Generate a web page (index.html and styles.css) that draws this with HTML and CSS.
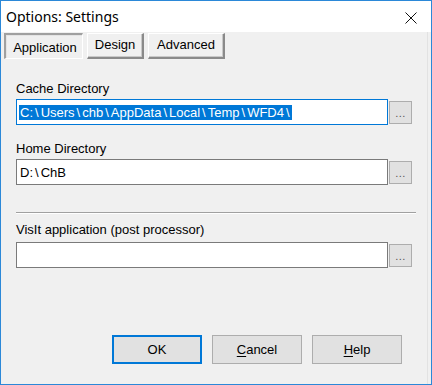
FILE: index.html
```html
<!DOCTYPE html>
<html>
<head>
<meta charset="utf-8">
<link rel="stylesheet" href="styles.css">
</head>
<body>
<div class="window">
  <div class="titlebar">
    <span class="title">Options: Settings</span>
    <svg class="close" width="12" height="12" viewBox="0 0 12 12"><path d="M0.5 0.5 L11.5 11.5 M11.5 0.5 L0.5 11.5" stroke="#111" stroke-width="1" fill="none"/></svg>
  </div>
  <div class="tabctl">
    <div class="tabs">
      <div class="tab selected w-app">Application</div>
      <div class="tab w-des">Design</div>
      <div class="tab w-adv">Advanced</div>
    </div>
    <div class="page">
      <div class="label first">Cache Directory</div>
      <div class="row">
        <div class="input focused"><span class="sel">C:<span class="bs">\</span>Users<span class="bs">\</span>chb<span class="bs">\</span>AppData<span class="bs">\</span>Local<span class="bs">\</span>Temp<span class="bs">\</span>WFD4<span class="bs">\</span></span></div>
        <div class="browse">...</div>
      </div>
      <div class="label second">Home Directory</div>
      <div class="row">
        <div class="input">D:<span class="bs">\</span>ChB</div>
        <div class="browse">...</div>
      </div>
      <div class="separator"></div>
      <div class="label third">VisIt application (post processor)</div>
      <div class="row">
        <div class="input"></div>
        <div class="browse">...</div>
      </div>
    </div>
    <div class="actions">
      <div class="btn default">OK</div>
      <div class="btn"><u>C</u>ancel</div>
      <div class="btn"><u>H</u>elp</div>
    </div>
  </div>
</div>
</body>
</html>
```

FILE: styles.css
```css
html, body {
  margin: 0;
  padding: 0;
  background: #f0f0f0;
}
.window {
  width: 432px;
  height: 385px;
  box-sizing: border-box;
  border: 1px solid #2b88d8;
  background: #f0f0f0;
  display: flex;
  flex-direction: column;
  font-family: "Liberation Sans", Arial, sans-serif;
  font-size: 13px;
  color: #000;
  overflow: hidden;
}
.titlebar {
  height: 31px;
  background: #fff;
  display: flex;
  align-items: center;
  justify-content: space-between;
  padding: 0 14px 0 5px;
  flex: none;
}
.title {
  font-family: "Noto Sans", "Open Sans", sans-serif;
  font-size: 14px;
  color: #000;
  margin-top: -1px;
}
.close {
  display: block;
  margin-top: 3px;
}
.tabctl {
  flex: 1;
  display: flex;
  flex-direction: column;
  border-right: 1px solid #e2e2e2;
  margin-right: 3px;
}
.tabs {
  display: flex;
  gap: 4px;
  padding-left: 3px;
  margin-top: 1px;
  height: 26px;
  flex: none;
}
.tab {
  box-sizing: border-box;
  height: 26px;
  display: flex;
  align-items: center;
  justify-content: center;
  background: #f0f0f0;
  border-top: 1px solid #fff;
  border-left: 1px solid #fff;
  border-right: 2px solid #8a8a8a;
  border-bottom: 2px solid #8a8a8a;
  box-shadow: inset -1px -1px 0 #c8c8c8;
  padding-bottom: 2px;
}
.tab.selected {
  border-top: 2px solid #a0a0a0;
  border-left: 2px solid #a0a0a0;
  border-right: 1px solid #fff;
  border-bottom: 1px solid #fff;
  box-shadow: inset 1px 1px 0 #e4e4e4;
  padding-bottom: 0;
  padding-top: 1px;
  padding-left: 2px;
}
.w-app { width: 79px; }
.w-des { width: 57px; }
.w-adv { width: 77px; }
.page {
  padding-left: 15px;
  display: flex;
  flex-direction: column;
}
.label {
  line-height: 15px;
  height: 15px;
}
.label.first { margin-top: 22px; margin-bottom: 3px; }
.label.second { margin-top: 16px; margin-bottom: 3px; }
.label.third { margin-top: 8px; margin-bottom: 5px; }
.row {
  display: flex;
  align-items: center;
}
.input {
  box-sizing: border-box;
  width: 372px;
  height: 26px;
  background: #fff;
  border: 1px solid #7a7a7a;
  padding: 0 3px;
  display: flex;
  align-items: center;
  line-height: 15px;
  white-space: nowrap;
  overflow: hidden;
}
.input.focused {
  border-color: #0078d7;
  padding-left: 2px;
}
.sel {
  background: #0078d7;
  color: #fff;
  padding-left: 1px;
}
.bs {
  padding: 0 2px;
}
.browse {
  box-sizing: border-box;
  width: 23px;
  height: 23px;
  margin-left: 1px;
  background: #e1e1e1;
  border: 1px solid #adadad;
  display: flex;
  justify-content: center;
  align-items: flex-end;
  font-size: 11px;
  line-height: 11px;
  padding-bottom: 4px;
  color: #555;
  letter-spacing: 0.5px;
}
.separator {
  margin-top: 27px;
  width: 400px;
  height: 0;
  border-top: 1px solid #a0a0a0;
  border-bottom: 1px solid #fff;
}
.actions {
  display: flex;
  justify-content: flex-end;
  gap: 10px;
  margin-top: 67px;
  padding-right: 25px;
}
.btn {
  box-sizing: border-box;
  width: 90px;
  height: 29px;
  background: #e1e1e1;
  border: 1px solid #adadad;
  display: flex;
  align-items: center;
  justify-content: center;
}
.btn.default {
  border: 2px solid #0078d7;
}
.btn u {
  text-decoration: underline;
  text-underline-offset: 2px;
}
```
